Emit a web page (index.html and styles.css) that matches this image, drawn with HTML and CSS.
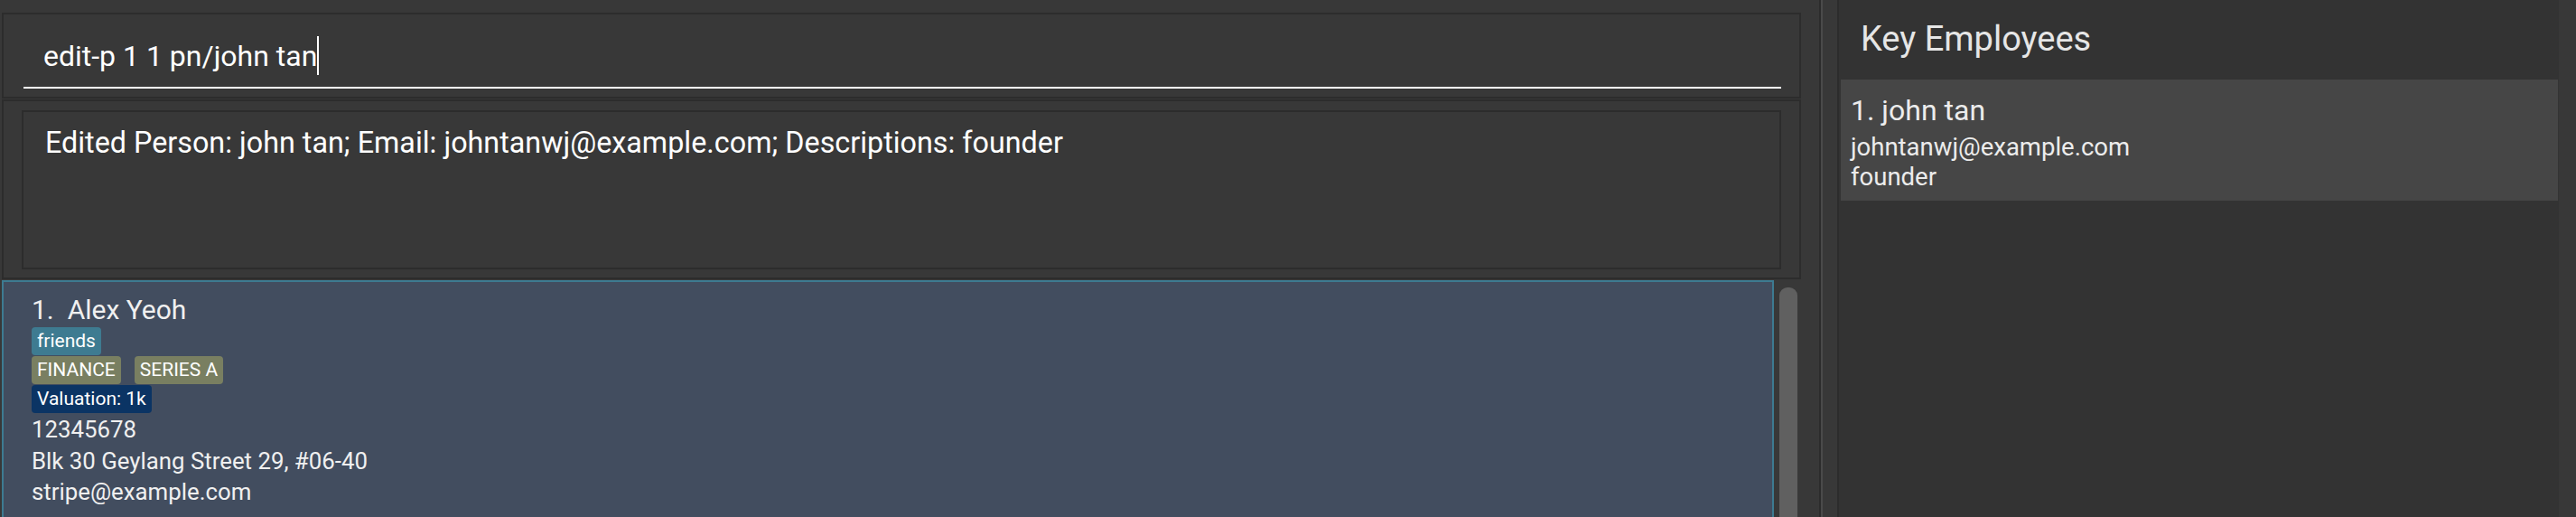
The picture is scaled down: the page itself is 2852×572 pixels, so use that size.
FILE: index.html
```html
<!DOCTYPE html>
<html>
<head>
<meta charset="utf-8">
<link rel="stylesheet" href="styles.css">
</head>
<body>
<div class="app">
  <div class="left">
    <div class="command-box">
      <div class="command-field"><span class="command-text">edit-p 1 1 pn/john tan</span><span class="caret"></span></div>
    </div>
    <div class="result-box">
      <div class="result-inner">Edited Person: john tan; Email: johntanwj@example.com; Descriptions: founder</div>
    </div>
    <div class="list-area">
      <div class="person-list">
        <div class="person-card">
          <div class="person-name">1.&nbsp; Alex Yeoh</div>
          <div class="tag-row"><span class="tag tag-friend">friends</span></div>
          <div class="tag-row"><span class="tag tag-industry">FINANCE</span><span class="tag tag-industry">SERIES A</span></div>
          <div class="tag-row"><span class="tag tag-valuation">Valuation: 1k</span></div>
          <div class="detail">12345678</div>
          <div class="detail">Blk 30 Geylang Street 29, #06-40</div>
          <div class="detail">stripe@example.com</div>
        </div>
      </div>
      <div class="scroll-track"><div class="scroll-thumb"></div></div>
    </div>
  </div>
  <div class="divider"><div class="div-dark"></div><div class="div-light"></div><div class="div-gap"></div><div class="div-dark2"></div></div>
  <div class="right">
    <div class="key-title">Key Employees</div>
    <div class="employee-card">
      <div class="emp-name">1. john tan</div>
      <div class="emp-line emp-email">johntanwj@example.com</div>
      <div class="emp-line">founder</div>
    </div>
  </div>
  <div class="right-margin"></div>
</div>
</body>
</html>
```
FILE: styles.css
```css
* { box-sizing: border-box; }
html, body {
  margin: 0;
  padding: 0;
  width: 2852px;
  height: 572px;
  overflow: hidden;
  background: #383838;
  font-family: Roboto, "Liberation Sans", sans-serif;
  color: #ffffff;
}
.app {
  display: flex;
  height: 572px;
}
.left {
  width: 2014px;
  flex: none;
  padding: 14px 0 0 2px;
  display: flex;
  flex-direction: column;
}
.command-box {
  width: 1992px;
  height: 95px;
  border: 2px solid #2c2c2c;
  padding: 0 20px 0 22px;
}
.command-field {
  border-bottom: 2px solid #ffffff;
  padding: 27px 0 15px 22px;
  font-size: 32px;
  line-height: 38px;
  height: 82px;
  white-space: nowrap;
}
.caret {
  display: inline-block;
  width: 2px;
  height: 43px;
  margin: -5px 0 -3px 0;
  background: #ffffff;
  vertical-align: -7px;
}
.result-box {
  width: 1992px;
  height: 199px;
  margin-top: 1px;
  border: 2px solid #2c2c2c;
  padding: 10px 20px 9px 20px;
}
.result-inner {
  height: 100%;
  border: 2px solid #2c2c2c;
  padding: 15px 24px;
  font-size: 32.3px;
  line-height: 38px;
  white-space: nowrap;
}
.list-area {
  margin-top: 1px;
  display: flex;
  flex: 1;
  overflow: hidden;
}
.person-list {
  width: 1962px;
  flex: none;
}
.person-card {
  background: #424d5f;
  border: 2px solid #3d7b91;
  padding: 12px 0 20px 31px;
  color: #f0f0f0;
}
.person-name {
  font-size: 30px;
  line-height: 38px;
}
.tag-row {
  display: flex;
  gap: 15px;
  margin-bottom: 1px;
}
.tag {
  display: inline-block;
  height: 31px;
  line-height: 31px;
  font-size: 21px;
  padding: 0 6px;
  border-radius: 4px;
  color: #ffffff;
}
.tag-friend { background: #3e7b91; }
.tag-industry { background: #797f61; }
.tag-valuation { background: #0b3464; }
.detail {
  font-size: 25.8px;
  line-height: 34.5px;
}
.scroll-track {
  width: 30px;
  padding: 8px 4px 0 6px;
}
.scroll-thumb {
  width: 20px;
  height: 400px;
  background: #606060;
  border-radius: 9px 9px 0 0;
}
.divider {
  display: flex;
  width: 22px;
  flex: none;
}
.div-dark { width: 2px; background: #2c2c2c; }
.div-light { width: 2px; background: #4a4a4a; }
.div-gap { width: 16px; background: #383838; }
.div-dark2 { width: 2px; background: #2c2c2c; }
.right {
  width: 797px;
  flex: none;
  background: #333333;
  padding-left: 2px;
}
.key-title {
  height: 88px;
  padding: 18px 0 0 22px;
  font-size: 38px;
  line-height: 50px;
  color: #e6e6e6;
}
.employee-card {
  width: 794px;
  height: 134px;
  background: #464646;
  padding: 13px 0 0 11px;
  color: #ececec;
}
.emp-name {
  font-size: 32px;
  line-height: 42px;
}
.emp-line {
  font-size: 27.5px;
  line-height: 33px;
}
.emp-email { margin-top: 3px; }
.right-margin {
  flex: 1;
  background: #383838;
}
```
